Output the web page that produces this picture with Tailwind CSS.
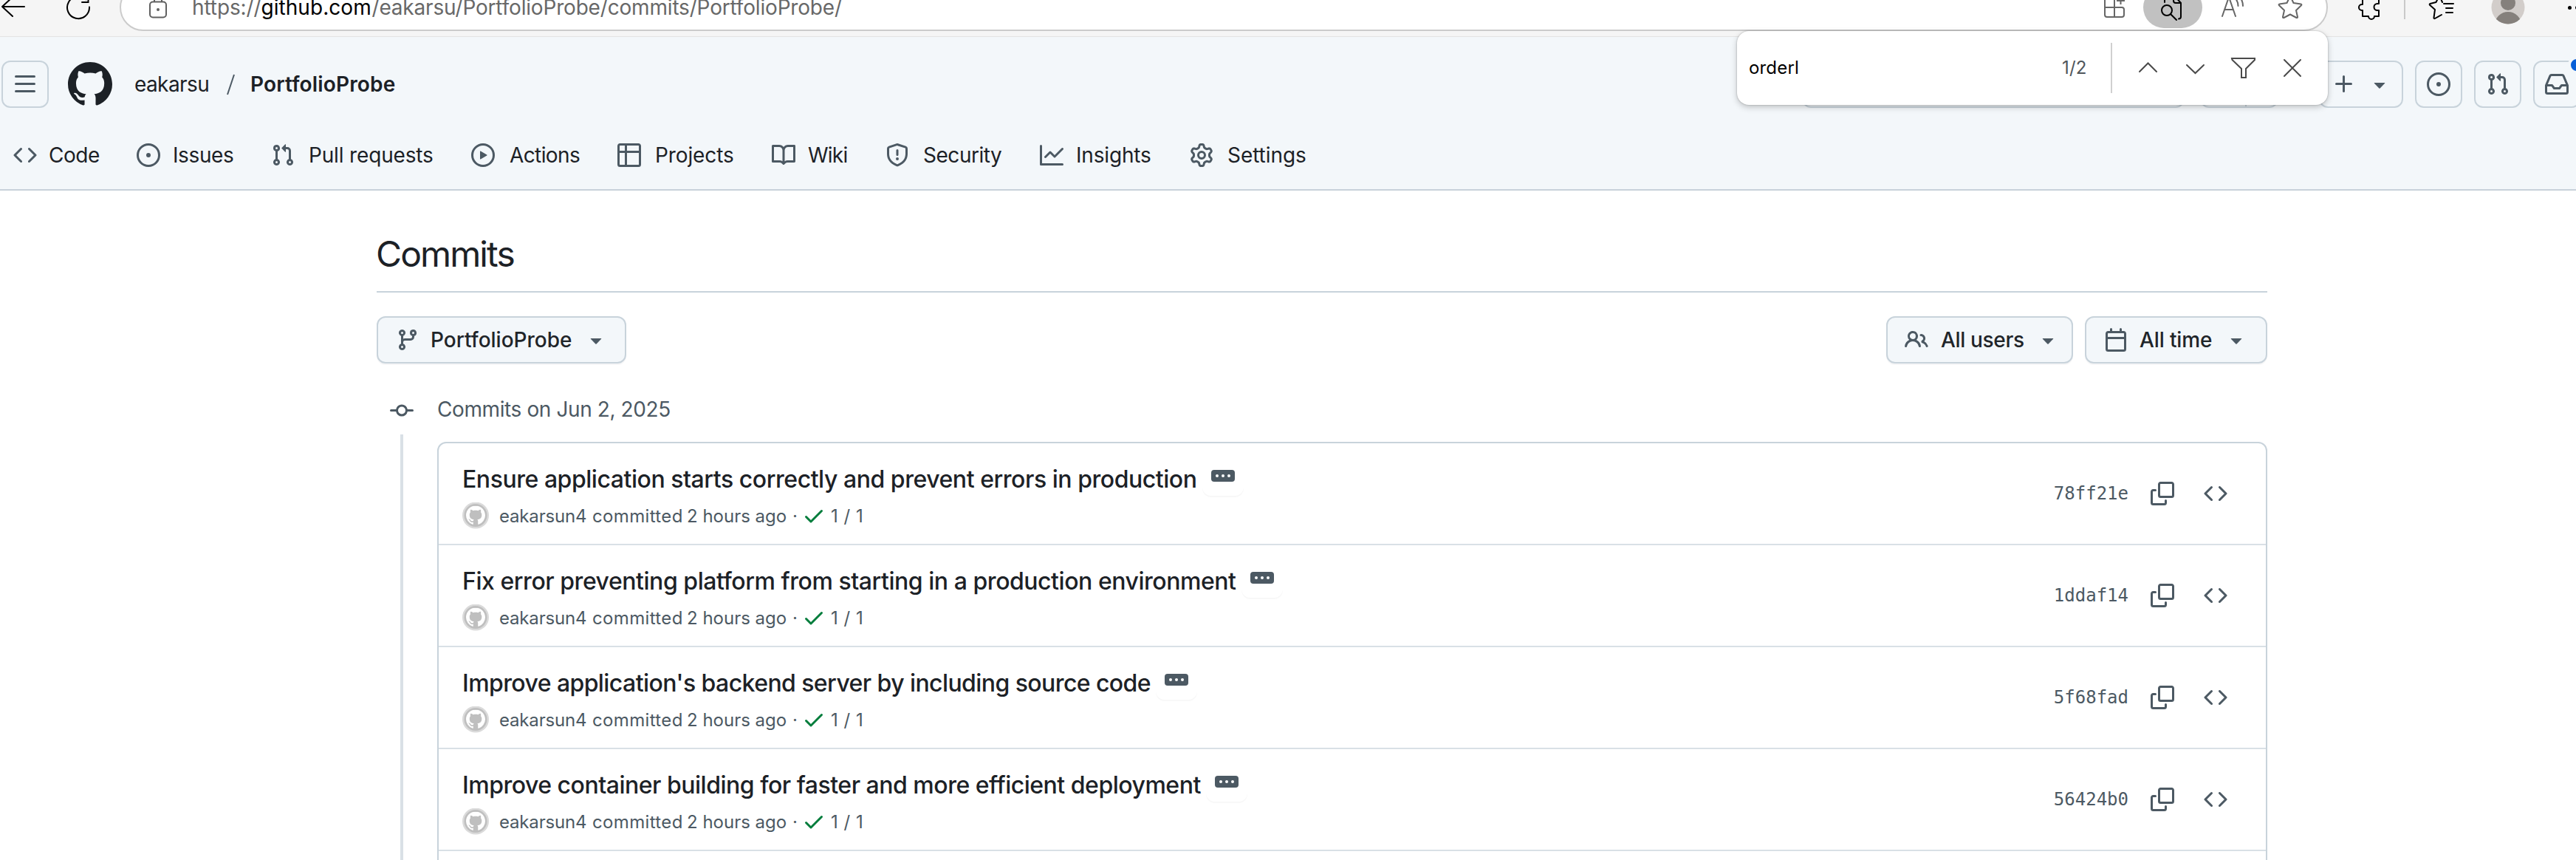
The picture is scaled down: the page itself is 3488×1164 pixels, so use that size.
<!DOCTYPE html>
<html lang="en">
<head>
<meta charset="utf-8">
<title>Commits · eakarsu/PortfolioProbe</title>
<script src="https://cdn.jsdelivr.net/npm/@tailwindcss/browser@4"></script>
</head>
<body class="relative h-[1164px] w-[3488px] overflow-hidden bg-white font-['Inter',sans-serif] text-[28px] text-[#1c2126]">

<svg class="hidden">
  <symbol id="mark" viewBox="0 0 16 16"><path d="M8 0c4.42 0 8 3.58 8 8a8.013 8.013 0 0 1-5.45 7.59c-.4.08-.55-.17-.55-.38 0-.27.01-1.13.01-2.2 0-.75-.25-1.23-.54-1.48 1.78-.2 3.65-.88 3.65-3.95 0-.88-.31-1.59-.82-2.15.08-.2.36-1.02-.08-2.12 0 0-.67-.22-2.2.82-.64-.18-1.32-.27-2-.27-.68 0-1.36.09-2 .27-1.53-1.03-2.2-.82-2.2-.82-.44 1.1-.16 1.92-.08 2.12-.51.56-.82 1.28-.82 2.15 0 3.06 1.86 3.75 3.64 3.95-.23.2-.44.55-.51 1.07-.46.21-1.61.55-2.33-.66-.15-.24-.6-.83-1.23-.82-.67.01-.27.38.01.53.34.19.73.9.82 1.13.16.45.68 1.31 2.69.94 0 .67.01 1.3.01 1.49 0 .21-.15.45-.55.38A7.995 7.995 0 0 1 0 8c0-4.42 3.58-8 8-8Z"/></symbol>
  <symbol id="bars" viewBox="0 0 16 16"><path d="M1.750 2h12.500a.75.75 0 0 1 0 1.500h-12.500a.75.75 0 0 1 0-1.500Zm0 5h12.500a.75.75 0 0 1 0 1.500h-12.500a.75.75 0 0 1 0-1.500Zm0 5h12.500a.75.75 0 0 1 0 1.500h-12.500a.75.75 0 0 1 0-1.500Z"/></symbol>
  <symbol id="code" viewBox="0 0 16 16"><path d="m11.28 3.22 4.25 4.25a.75.75 0 0 1 0 1.06l-4.25 4.25a.749.749 0 0 1-1.275-.326.749.749 0 0 1 .215-.734L13.94 8l-3.72-3.72a.749.749 0 0 1 .326-1.275.749.749 0 0 1 .734.215Zm-6.56 0a.751.751 0 0 1 1.042.018.751.751 0 0 1 .018 1.042L2.06 8l3.72 3.72a.749.749 0 0 1-.326 1.275.749.749 0 0 1-.734-.215L.47 8.53a.75.75 0 0 1 0-1.06Z"/></symbol>
  <symbol id="issue" viewBox="0 0 16 16"><path d="M8 9.5a1.5 1.5 0 1 0 0-3 1.5 1.5 0 0 0 0 3Z"/><path d="M8 0a8 8 0 1 1 0 16A8 8 0 0 1 8 0ZM1.5 8a6.5 6.5 0 1 0 13 0 6.5 6.5 0 0 0-13 0Z"/></symbol>
  <symbol id="pr" viewBox="0 0 16 16"><path d="M1.5 3.25a2.25 2.25 0 1 1 3 2.122v5.256a2.251 2.251 0 1 1-1.5 0V5.372A2.25 2.25 0 0 1 1.5 3.25Zm5.677-.177L9.573.677A.25.25 0 0 1 10 .854V2.5h1A2.5 2.5 0 0 1 13.5 5v5.628a2.251 2.251 0 1 1-1.5 0V5a1 1 0 0 0-1-1h-1v1.646a.25.25 0 0 1-.427.177L7.177 3.427a.25.25 0 0 1 0-.354ZM3.75 2.5a.75.75 0 1 0 0 1.5.75.75 0 0 0 0-1.5Zm0 9.5a.75.75 0 1 0 0 1.5.75.75 0 0 0 0-1.5Zm8.25.75a.75.75 0 1 0 1.5 0 .75.75 0 0 0-1.5 0Z"/></symbol>
  <symbol id="play" viewBox="0 0 16 16"><path d="M8 0a8 8 0 1 1 0 16A8 8 0 0 1 8 0ZM1.5 8a6.5 6.5 0 1 0 13 0 6.5 6.5 0 0 0-13 0Zm4.879-2.773 4.264 2.559a.25.25 0 0 1 0 .428l-4.264 2.559A.25.25 0 0 1 6 10.559V5.442a.25.25 0 0 1 .379-.215Z"/></symbol>
  <symbol id="table" viewBox="0 0 16 16"><path d="M0 1.75C0 .784.784 0 1.75 0h12.5C15.216 0 16 .784 16 1.75v12.5A1.75 1.75 0 0 1 14.25 16H1.75A1.75 1.75 0 0 1 0 14.25ZM6.5 6.5v8h7.75a.25.25 0 0 0 .25-.25V6.5Zm8-1.5V1.75a.25.25 0 0 0-.25-.25H6.5V5Zm-13 1.5v7.75c0 .138.112.25.25.25H5v-8ZM5 5V1.5H1.75a.25.25 0 0 0-.25.25V5Z"/></symbol>
  <symbol id="book" viewBox="0 0 16 16"><path d="M0 1.75A.75.75 0 0 1 .75 1h4.253c1.227 0 2.317.59 3 1.501A3.743 3.743 0 0 1 11.006 1h4.245a.75.75 0 0 1 .75.75v10.5a.75.75 0 0 1-.75.75h-4.507a2.25 2.25 0 0 0-1.591.659l-.622.621a.75.75 0 0 1-1.06 0l-.622-.621A2.25 2.25 0 0 0 5.258 13H.75a.75.75 0 0 1-.75-.75Zm7.251 10.324.004-5.073-.002-2.253A2.25 2.25 0 0 0 5.003 2.5H1.5v9h3.757a3.75 3.75 0 0 1 1.994.574ZM8.755 4.75l-.004 7.322a3.752 3.752 0 0 1 1.992-.572H14.5v-9h-3.495a2.25 2.25 0 0 0-2.25 2.25Z"/></symbol>
  <symbol id="shield" viewBox="0 0 16 16"><path d="M7.467.133a1.748 1.748 0 0 1 1.066 0l5.25 1.68A1.75 1.75 0 0 1 15 3.48V7c0 1.566-.32 3.182-1.303 4.682-.983 1.498-2.585 2.813-5.032 3.855a1.697 1.697 0 0 1-1.33 0c-2.447-1.042-4.049-2.357-5.032-3.855C1.32 10.182 1 8.566 1 7V3.48a1.75 1.75 0 0 1 1.217-1.667Zm.61 1.429a.25.25 0 0 0-.153 0l-5.25 1.68a.25.25 0 0 0-.174.238V7c0 1.358.275 2.666 1.057 3.86.784 1.194 2.121 2.34 4.366 3.297a.196.196 0 0 0 .154 0c2.245-.956 3.582-2.104 4.366-3.298C13.225 9.666 13.5 8.36 13.5 7V3.48a.251.251 0 0 0-.174-.237l-5.25-1.68ZM8.75 4.75v3a.75.75 0 0 1-1.5 0v-3a.75.75 0 0 1 1.5 0ZM9 10.5a1 1 0 1 1-2 0 1 1 0 0 1 2 0Z"/></symbol>
  <symbol id="graph" viewBox="0 0 16 16"><path d="M1.5 1.75V13.5h13.75a.75.75 0 0 1 0 1.5H.75a.75.75 0 0 1-.75-.75V1.75a.75.75 0 0 1 1.5 0Zm14.28 2.53-5.25 5.25a.75.75 0 0 1-1.06 0L7 7.06 4.28 9.78a.751.751 0 0 1-1.042-.018.751.751 0 0 1-.018-1.042l3.25-3.25a.75.75 0 0 1 1.06 0L10 7.94l4.72-4.72a.751.751 0 0 1 1.042.018.751.751 0 0 1 .018 1.042Z"/></symbol>
  <symbol id="gear" viewBox="0 0 16 16"><path d="M8 0a8.2 8.2 0 0 1 .701.031C9.444.095 9.99.645 10.16 1.29l.288 1.107c.018.066.079.158.212.224.231.114.454.243.668.386.123.082.233.09.299.071l1.103-.303c.644-.176 1.392.021 1.82.63.27.385.506.792.704 1.218.315.675.111 1.422-.364 1.891l-.814.806c-.049.048-.098.147-.088.294.016.257.016.515 0 .772-.01.147.038.246.088.294l.814.806c.475.469.679 1.216.364 1.891a7.977 7.977 0 0 1-.704 1.217c-.428.61-1.176.807-1.82.63l-1.102-.302c-.067-.019-.177-.011-.3.071a5.909 5.909 0 0 1-.668.386c-.133.066-.194.158-.211.224l-.29 1.106c-.168.646-.715 1.196-1.458 1.26a8.006 8.006 0 0 1-1.402 0c-.743-.064-1.289-.614-1.458-1.26l-.289-1.106c-.018-.066-.079-.158-.212-.224a5.738 5.738 0 0 1-.668-.386c-.123-.082-.233-.09-.299-.071l-1.103.303c-.644.176-1.392-.021-1.82-.63a8.12 8.12 0 0 1-.704-1.218c-.315-.675-.111-1.422.363-1.891l.815-.806c.05-.048.098-.147.088-.294a6.214 6.214 0 0 1 0-.772c.01-.147-.038-.246-.088-.294l-.815-.806C.635 6.045.431 5.298.746 4.623a7.92 7.92 0 0 1 .704-1.217c.428-.61 1.176-.807 1.82-.63l1.102.302c.067.019.177.011.3-.071.214-.143.437-.272.668-.386.133-.066.194-.158.211-.224l.29-1.106C6.009.645 6.556.095 7.299.03 7.53.01 7.764 0 8 0Zm-.571 1.525c-.036.003-.108.036-.137.146l-.289 1.105c-.147.561-.549.967-.998 1.189-.173.086-.34.183-.5.29-.417.278-.97.423-1.529.27l-1.103-.303c-.109-.03-.175.016-.195.045-.22.312-.412.644-.573.99-.014.031-.021.11.059.19l.815.806c.411.406.562.957.53 1.456a4.709 4.709 0 0 0 0 .582c.032.499-.119 1.05-.53 1.456l-.815.806c-.081.08-.073.159-.059.19.162.346.353.677.573.989.02.03.085.076.195.046l1.102-.303c.56-.153 1.113-.008 1.53.27.161.107.328.204.501.29.447.222.85.629.997 1.189l.289 1.105c.029.109.101.143.137.146a6.6 6.6 0 0 0 1.142 0c.036-.003.108-.036.137-.146l.289-1.105c.147-.561.549-.967.998-1.189.173-.086.34-.183.5-.29.417-.278.97-.423 1.529-.27l1.103.303c.109.029.175-.016.195-.045.22-.313.411-.644.573-.99.014-.031.021-.11-.059-.19l-.815-.806c-.411-.406-.562-.957-.53-1.456a4.709 4.709 0 0 0 0-.582c-.032-.499.119-1.05.53-1.456l.815-.806c.081-.08.073-.159.059-.19a6.464 6.464 0 0 0-.573-.989c-.02-.03-.085-.076-.195-.046l-1.102.303c-.56.153-1.113.008-1.53-.27a4.44 4.44 0 0 0-.501-.29c-.447-.222-.85-.629-.997-1.189l-.289-1.105c-.029-.11-.101-.143-.137-.146a6.6 6.6 0 0 0-1.142 0ZM11 8a3 3 0 1 1-6 0 3 3 0 0 1 6 0ZM9.5 8a1.5 1.5 0 1 0-3.001.001A1.5 1.5 0 0 0 9.5 8Z"/></symbol>
  <symbol id="people" viewBox="0 0 16 16"><path d="M2 5.5a3.5 3.5 0 1 1 5.898 2.549 5.508 5.508 0 0 1 3.034 4.084.75.75 0 1 1-1.482.235 4 4 0 0 0-7.9 0 .75.75 0 0 1-1.482-.236A5.507 5.507 0 0 1 3.102 8.05 3.493 3.493 0 0 1 2 5.5ZM11 4a3.001 3.001 0 0 1 2.22 5.018 5.01 5.01 0 0 1 2.56 3.012.749.749 0 0 1-.885.954.752.752 0 0 1-.549-.514 3.507 3.507 0 0 0-2.522-2.372.75.75 0 0 1-.574-.73v-.352a.75.75 0 0 1 .416-.672A1.5 1.5 0 0 0 11 5.5.75.75 0 0 1 11 4Zm-5.5-.5a2 2 0 1 0-.001 3.999A2 2 0 0 0 5.5 3.5Z"/></symbol>
  <symbol id="calendar" viewBox="0 0 16 16"><path d="M4.75 0a.75.75 0 0 1 .75.75V2h5V.75a.75.75 0 0 1 1.5 0V2h1.25c.966 0 1.75.784 1.75 1.75v10.5A1.75 1.75 0 0 1 13.25 16H2.75A1.75 1.75 0 0 1 1 14.25V3.75C1 2.784 1.784 2 2.75 2H4V.75A.75.75 0 0 1 4.75 0ZM2.5 7.5v6.75c0 .138.112.25.25.25h10.5a.25.25 0 0 0 .25-.25V7.5Zm10.75-4H2.75a.25.25 0 0 0-.25.25V6h11V3.75a.25.25 0 0 0-.25-.25Z"/></symbol>
  <symbol id="copy" viewBox="0 0 16 16"><path d="M0 6.75C0 5.784.784 5 1.75 5h1.5a.75.75 0 0 1 0 1.5h-1.5a.25.25 0 0 0-.25.25v7.5c0 .138.112.25.25.25h7.5a.25.25 0 0 0 .25-.25v-1.5a.75.75 0 0 1 1.5 0v1.5A1.75 1.75 0 0 1 9.25 16h-7.5A1.75 1.75 0 0 1 0 14.25Z"/><path d="M5 1.75C5 .784 5.784 0 6.75 0h7.5C15.216 0 16 .784 16 1.75v7.5A1.75 1.75 0 0 1 14.25 11h-7.5A1.75 1.75 0 0 1 5 9.25Zm1.75-.25a.25.25 0 0 0-.25.25v7.5c0 .138.112.25.25.25h7.5a.25.25 0 0 0 .25-.25v-7.5a.25.25 0 0 0-.25-.25Z"/></symbol>
  <symbol id="branch" viewBox="0 0 16 16"><path d="M9.5 3.25a2.25 2.25 0 1 1 3 2.122V6A2.5 2.5 0 0 1 10 8.5H6a1 1 0 0 0-1 1v1.128a2.251 2.251 0 1 1-1.5 0V5.372a2.25 2.25 0 1 1 1.5 0v1.836A2.493 2.493 0 0 1 6 7h4a1 1 0 0 0 1-1v-.628A2.25 2.25 0 0 1 9.5 3.25Zm-6 0a.75.75 0 1 0 1.5 0 .75.75 0 0 0-1.5 0Zm8.25-.75a.75.75 0 1 0 0 1.5.75.75 0 0 0 0-1.5ZM4.25 12a.75.75 0 1 0 0 1.5.75.75 0 0 0 0-1.5Z"/></symbol>
  <symbol id="commit" viewBox="0 0 16 16"><path d="M11.93 8.5a4.002 4.002 0 0 1-7.86 0H.75a.75.75 0 0 1 0-1.5h3.32a4.002 4.002 0 0 1 7.86 0h3.32a.75.75 0 0 1 0 1.5Zm-1.43-.75a2.5 2.5 0 1 0-5 0 2.5 2.5 0 0 0 5 0Z"/></symbol>
  <symbol id="check" viewBox="0 0 16 16"><path d="M13.78 4.22a.75.75 0 0 1 0 1.06l-7.25 7.25a.75.75 0 0 1-1.06 0L2.22 9.28a.751.751 0 0 1 .018-1.042.751.751 0 0 1 1.042-.018L6 10.94l6.72-6.72a.75.75 0 0 1 1.06 0Z"/></symbol>
  <symbol id="caret" viewBox="0 0 16 16"><path d="m4.427 7.427 3.396 3.396a.25.25 0 0 0 .354 0l3.396-3.396A.25.25 0 0 0 11.396 7H4.604a.25.25 0 0 0-.177.427Z"/></symbol>
  <symbol id="inbox" viewBox="0 0 16 16"><path d="M2.8 2.06A1.75 1.75 0 0 1 4.41 1h7.18c.7 0 1.333.417 1.61 1.06l2.74 6.395c.04.093.06.194.06.295v4.5A1.75 1.75 0 0 1 14.25 15H1.75A1.75 1.75 0 0 1 0 13.25v-4.5c0-.101.02-.202.06-.295Zm1.61.44a.25.25 0 0 0-.23.152L1.887 8H4.75a.75.75 0 0 1 .6.3L6.625 10h2.75l1.275-1.7a.75.75 0 0 1 .6-.3h2.863L11.82 2.652a.25.25 0 0 0-.23-.152Zm10.09 7h-2.875l-1.275 1.7a.75.75 0 0 1-.6.3h-3.5a.75.75 0 0 1-.6-.3L4.375 9.5H1.5v3.75c0 .138.112.25.25.25h12.5a.25.25 0 0 0 .25-.25Z"/></symbol>
  <symbol id="plus" viewBox="0 0 16 16"><path d="M7.75 2a.75.75 0 0 1 .75.75V7h4.25a.75.75 0 0 1 0 1.5H8.5v4.25a.75.75 0 0 1-1.5 0V8.5H2.75a.75.75 0 0 1 0-1.5H7V2.75A.75.75 0 0 1 7.75 2Z"/></symbol>
</svg>

<!-- Browser toolbar -->
<div class="h-[50px] overflow-hidden border-b border-[#e3e3e3] bg-[#f5f5f5]">
  <div class="-mt-[22px] flex h-16 items-center">
    <svg class="h-8 w-9 shrink-0" viewBox="0 0 36 32" fill="none" stroke="#000" stroke-width="2" stroke-linecap="round" stroke-linejoin="round"><path d="M33 15H3M17 2 3 15l14 13"/></svg>
    <svg class="ml-[52px] h-9 w-9 shrink-0" viewBox="0 0 36 36" fill="none" stroke="#000" stroke-width="2" stroke-linecap="round" stroke-linejoin="miter"><path d="M33 17.500A15 15 0 1 1 28.500 7.400M23 11h8.500V1"/></svg>
    <div class="ml-[38px] flex h-16 w-[2990px] shrink-0 items-center rounded-full border-2 border-[#cbcbcb] bg-white pl-9">
      <svg class="h-9 w-7 shrink-0" viewBox="0 0 28 36" fill="none" stroke="#606060" stroke-width="2"><rect x="3" y="10.500" width="22" height="21" rx="4"/><path d="M9 10V6a5 5 0 0 1 10 0v4"/><circle cx="14" cy="21" r="2" fill="#606060" stroke="none"/></svg>
      <div class="ml-[32px] flex whitespace-pre text-[#686868]"><span class="w-[93.500px] tracking-[-0.100px]">https://</span><span class="w-[150px] tracking-[0.050px] text-black">github.com</span><span class="tracking-[-0.180px]">/eakarsu/PortfolioProbe/commits/PortfolioProbe/</span></div>
      <div class="ml-auto flex items-center pr-[30px]">
        <svg class="h-8 w-8" viewBox="0 0 32 32" fill="none" stroke="#666" stroke-width="2"><path d="M15 3H5a3 3 0 0 0-3 3v20a3 3 0 0 0 3 3h20a3 3 0 0 0 3-3v-7a3 3 0 0 0-3-3H2M15 3v26M23.500 1v11M18 7h11"/></svg>
        <div class="ml-[22px] flex h-14 w-20 items-center justify-center rounded-full bg-[#c1c1c1]">
          <svg class="h-9 w-8" viewBox="0 0 32 36" fill="none" stroke="#000" stroke-width="2" stroke-linecap="round"><circle cx="8" cy="22" r="7"/><path d="m13 27 8 8M5 11V4a3 3 0 0 1 3-3h9l10 11v18.500a3 3 0 0 1-3 3M17 1v8a3 3 0 0 0 3 3h7"/></svg>
        </div>
        <svg class="ml-6 h-9 w-9" viewBox="0 0 36 36" fill="none" stroke="#666" stroke-width="2" stroke-linecap="round"><path d="m3 30 9-26 9 26M6 21h12M20 5c3 3 4.500 7 4.500 11M25 2c4 4 6 9 6 14"/></svg>
        <svg class="ml-[42px] h-9 w-9" viewBox="0 0 36 36" fill="none" stroke="#666" stroke-width="2" stroke-linejoin="round"><path d="M17 2.500 21.500 12l10 1.500a1 1 0 0 1 .5 1.800L25 22l2 9a1 1 0 0 1-1.500 1L17 27.500 8.500 32A1 1 0 0 1 7 31l2-9-7-6.700a1 1 0 0 1 .5-1.800l10-1.500Z"/></svg>
      </div>
    </div>
    <svg class="ml-[41px] h-9 w-9 shrink-0" viewBox="0 0 36 36" fill="none" stroke="#000" stroke-width="2" stroke-linejoin="round"><path d="M4 6h8a4 4 0 1 1 8 0h8v7h-2a4.500 4.500 0 0 0 0 9h2v8h-6a4 4 0 0 1-8 0H6v-8H5a4 4 0 0 1 0-8h1V6Z"/></svg>
    <div class="ml-[26px] h-8 w-[2px] shrink-0 bg-[#c9c9c9]"></div>
    <svg class="ml-7 h-9 w-10 shrink-0" viewBox="0 0 40 36" fill="none" stroke="#000" stroke-width="2" stroke-linecap="round" stroke-linejoin="round"><path d="M24 13h13M27 19h9M27 25h9M22 11 18 2l-4.500 9-8 2a1 1 0 0 0-.5 1.700L12 21l-1.500 11a1 1 0 0 0 1.500 1l9-5"/></svg>
    <svg class="ml-12 h-[46px] w-[46px] shrink-0" viewBox="0 0 46 46"><defs><clipPath id="face"><circle cx="23" cy="23" r="22.500"/></clipPath></defs><g clip-path="url(#face)"><path fill="#d2cdca" d="M0 0h46v46H0z"/><circle cx="23" cy="17" r="10" fill="#85807c"/><circle cx="23" cy="47" r="18" fill="#85807c"/></g></svg>
    <div class="ml-[58px] flex shrink-0 gap-[5px]"><i class="h-[5px] w-[5px] rounded-full bg-black"></i><i class="h-[5px] w-[5px] rounded-full bg-black"></i></div>
  </div>
</div>

<!-- Repository header -->
<header class="h-52 border-b-2 border-[#c8d1da] bg-[#f3f7fa]">
  <div class="flex h-32 items-center overflow-hidden pl-[2px]">
    <button class="flex h-16 w-16 shrink-0 items-center justify-center rounded-xl border-2 border-[#c8d3db] text-[#4c5963]"><svg class="h-8 w-8" fill="currentColor"><use href="#bars"/></svg></button>
    <svg class="ml-[26px] h-[60px] w-[60px] shrink-0" fill="#1c2126"><use href="#mark"/></svg>
    <span class="ml-[30px] w-[123px] shrink-0 tracking-[-0.600px]">eakarsu</span>
    <svg class="h-8 w-4 shrink-0" viewBox="0 0 16 32" fill="none" stroke="#4c5963" stroke-width="2"><path d="M12 3 3 30"/></svg>
    <span class="ml-[18px] w-[196px] shrink-0 font-semibold tracking-[0.160px]">PortfolioProbe</span>
    <div class="ml-[1905px] flex shrink-0 items-center text-[#4c5963]">
      <div class="h-16 w-[518px] rounded-xl border-2 border-[#c8d3db]"></div>
      <div class="ml-[21px] flex h-16 w-[106px] rounded-xl border-2 border-[#c8d3db]"><div class="w-[61px] border-r-2 border-[#c8d3db]"></div></div>
      <button class="ml-[55px] flex h-16 w-[114px] items-center rounded-xl border-2 border-[#c8d3db] pl-4"><svg class="h-8 w-8" fill="currentColor"><use href="#plus"/></svg><svg class="ml-4 h-8 w-8" fill="currentColor"><use href="#caret"/></svg></button>
      <button class="ml-4 flex h-16 w-16 items-center justify-center rounded-xl border-2 border-[#c8d3db]"><svg class="h-8 w-8" fill="currentColor"><use href="#issue"/></svg></button>
      <button class="ml-4 flex h-16 w-16 items-center justify-center rounded-xl border-2 border-[#c8d3db]"><svg class="h-8 w-8" fill="currentColor"><use href="#pr"/></svg></button>
      <button class="relative ml-4 flex h-16 w-16 items-center justify-center rounded-xl border-2 border-[#c8d3db]"><svg class="h-8 w-8" fill="currentColor"><use href="#inbox"/></svg><i class="absolute -top-2 right-[-9px] h-6 w-6 rounded-full border-4 border-[#f3f7fa] bg-[#0860d8]"></i></button>
    </div>
  </div>
  <nav class="flex h-16 items-center pl-[18px]" id="nav"></nav>
</header>

<!-- Commit history -->
<main class="ml-[510px] w-[2560px] pt-[54px]">
  <h1 class="h-[84px] border-b-2 border-[#c8d3db] text-[48px] leading-[64px] tracking-[-1.900px] -indent-px">Commits</h1>
  <div class="mt-8 flex items-center font-medium text-[#1f2529]">
    <button class="flex h-16 w-[338px] items-center rounded-xl border-2 border-[#c8d3db] bg-[#f3f7fa] pl-6 shadow-[0_2px_0_rgba(31,35,40,0.04)]"><svg class="h-8 w-8 text-[#4c5963]" fill="currentColor"><use href="#branch"/></svg><span class="ml-[15px] w-[198px] text-left">PortfolioProbe</span><svg class="ml-[10px] h-8 w-8 text-[#4c5963]" fill="currentColor"><use href="#caret"/></svg></button>
    <button class="ml-auto flex h-16 w-[253px] items-center rounded-xl border-2 border-[#c8d3db] bg-[#f3f7fa] pl-[23px] shadow-[0_2px_0_rgba(31,35,40,0.04)]"><svg class="h-8 w-8 text-[#4c5963]" fill="currentColor"><use href="#people"/></svg><span class="ml-[17px] w-[116px] text-left whitespace-nowrap tracking-[-0.330px]">All users</span><svg class="ml-[13px] h-8 w-8 text-[#4c5963]" fill="currentColor"><use href="#caret"/></svg></button>
    <button class="ml-4 flex h-16 w-[247px] items-center rounded-xl border-2 border-[#c8d3db] bg-[#f3f7fa] pl-[24px] shadow-[0_2px_0_rgba(31,35,40,0.04)]"><svg class="h-8 w-8 text-[#4c5963]" fill="currentColor"><use href="#calendar"/></svg><span class="ml-[16px] w-[102px] text-left whitespace-nowrap tracking-[-0.130px]">All time</span><svg class="ml-[13px] h-8 w-8 text-[#4c5963]" fill="currentColor"><use href="#caret"/></svg></button>
  </div>
  <div class="mt-10 flex h-[42px] items-center pl-[18px] leading-[42px] text-[#4c5963]"><svg class="mt-[5px] h-8 w-8" fill="currentColor"><use href="#commit"/></svg><h2 class="ml-[32px] pt-[2px] tracking-[-0.400px]">Commits on Jun 2, 2025</h2></div>
  <div class="flex h-[590px] overflow-hidden">
    <div class="w-[82px] shrink-0 pt-[14px] pl-8"><div class="h-full w-1 bg-[#d9e0e6]"></div></div>
    <div class="flex-1 pt-6"><ul class="h-[700px] rounded-xl border-2 border-[#c8d3db]" id="commits"></ul></div>
  </div>
</main>

<!-- Find on page -->
<div class="absolute top-[42px] left-[2352px] flex h-[100px] w-[800px] items-center rounded-2xl bg-white text-[24px] text-black shadow-[0_0_2px_rgba(0,0,0,0.3),0_3px_8px_rgba(0,0,0,0.22)]">
  <span class="ml-4 w-[424px] tracking-[0.170px]">orderl</span>
  <span class="w-[50px] tracking-[0.200px] text-[#50565b]">1/2</span>
  <div class="ml-4 h-[68px] w-[2px] bg-[#d0d0d0]"></div>
  <svg class="ml-[32px] h-8 w-8" viewBox="0 0 32 32" fill="none" stroke="#4a4a4a" stroke-width="2" stroke-linecap="round"><path d="m5 21 11.500-11.500L28 21"/></svg>
  <svg class="ml-8 h-8 w-8" viewBox="0 0 32 32" fill="none" stroke="#4a4a4a" stroke-width="2" stroke-linecap="round"><path d="m5 12 11.500 11L28 12"/></svg>
  <svg class="ml-[32px] h-8 w-9" viewBox="0 0 36 32" fill="none" stroke="#4a4a4a" stroke-width="2"><path d="M2 3h31v2L21 17v12h-6V17L2.500 5Z"/></svg>
  <svg class="ml-8 h-8 w-8" viewBox="0 0 32 32" fill="none" stroke="#4a4a4a" stroke-width="2" stroke-linecap="round"><path d="m5 5 22 22M27 5 5 27"/></svg>
</div>

<script>
const tabs = [
  ["code", "Code", "w-[167px]", "ml-4 tracking-[-0.450px]"],
  ["issue", "Issues", "w-[182px]", "ml-[17px] tracking-[-0.400px]"],
  ["pr", "Pull requests", "w-[271px]", "ml-[19px] tracking-[-0.160px]"],
  ["play", "Actions", "w-[198px]", "ml-5 tracking-[-0.600px]"],
  ["table", "Projects", "w-[209px]", "ml-[19px] tracking-[-0.110px]"],
  ["book", "Wiki", "w-[154px]", "ml-[17px] tracking-[-0.750px]"],
  ["shield", "Security", "w-[209px]", "ml-[19px] tracking-[-0.470px]"],
  ["graph", "Insights", "w-[203px]", "ml-[17px] tracking-[-0.180px]"],
  ["gear", "Settings", "w-[200px]", "ml-[19px] tracking-[-0.060px]"]
];
document.getElementById("nav").innerHTML = tabs.map(([icon, label, width, text]) =>
  `<a class="${width} flex shrink-0 items-center"><svg class="h-8 w-8 shrink-0 text-[#4c5963]" fill="currentColor"><use href="#${icon}"/></svg><span class="${text} whitespace-nowrap">${label}</span></a>`).join("");

const commits = [
  ["Ensure application starts correctly and prevent errors in production", "78ff21e", "tracking-[-0.460px]"],
  ["Fix error preventing platform from starting in a production environment", "1ddaf14", "tracking-[-0.460px]"],
  ["Improve application's backend server by including source code", "5f68fad", "tracking-[-0.580px]"],
  ["Improve container building for faster and more efficient deployment", "56424b0", "tracking-[-0.490px]"]
];
document.getElementById("commits").innerHTML = commits.map(([title, sha, track]) => `
  <li class="flex h-[138px] items-center border-b-2 border-[#d9e0e6] pr-[52px] pl-8 text-[#4c5963]">
    <div class="h-full pt-[25px]">
      <div class="flex h-12 items-start">
        <h3 class="${track} text-[32px] leading-[48px] font-medium whitespace-nowrap text-[#1c2126]">${title}</h3>
        <div class="ml-[7px] flex h-[46px] w-14 justify-center rounded-xl pt-[11px] shadow-[0_2px_0_rgba(31,35,40,0.03)]">
          <div class="flex h-4 w-8 items-center justify-center gap-1 rounded bg-[#4c5963]"><i class="h-1 w-1 rounded-full bg-white"></i><i class="h-1 w-1 rounded-full bg-white"></i><i class="h-1 w-1 rounded-full bg-white"></i></div>
        </div>
      </div>
      <div class="mt-[7px] flex h-9 items-center text-[24px] leading-9 whitespace-nowrap">
        <svg class="h-9 w-9" viewBox="0 0 36 36"><circle cx="18" cy="17.500" r="18" fill="#dadada"/><circle cx="18" cy="17.500" r="15.500" fill="#bfbfbf"/><svg x="5" y="4.500" width="26" height="26" fill="#fff"><use href="#mark"/></svg></svg>
        <span class="ml-[14px] w-[126px] pt-px tracking-[-0.180px]">eakarsun4</span>
        <span class="w-[128px] pt-px tracking-[0.350px]">committed</span>
        <span class="w-[143px] pt-px">2 hours ago</span>
        <span class="w-[13px] pt-px">·</span>
        <svg class="h-8 w-8 text-[#057d3c]" fill="currentColor"><use href="#check"/></svg>
        <span class="ml-[7px] pt-px tracking-[0.500px]">1 / 1</span>
      </div>
    </div>
    <span class="ml-auto font-['DejaVu_Sans_Mono',monospace] text-[24px]">${sha}</span>
    <svg class="ml-[30px] h-8 w-8" fill="currentColor"><use href="#copy"/></svg>
    <svg class="ml-10 h-8 w-8" fill="currentColor"><use href="#code"/></svg>
  </li>`).join("");
</script>
</body>
</html>
